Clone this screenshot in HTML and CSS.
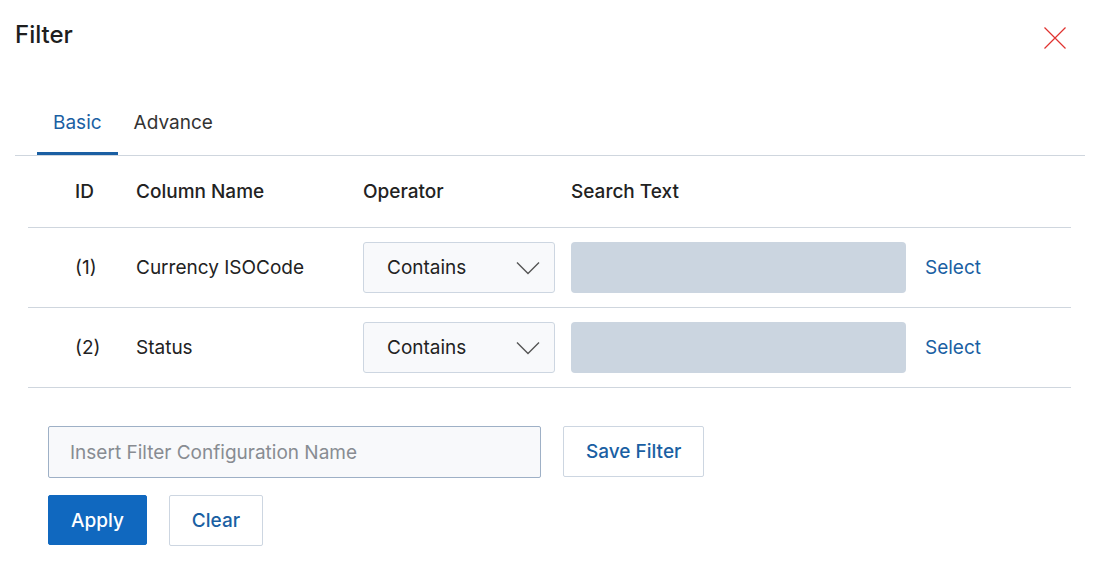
FILE: index.html
```html
<!DOCTYPE html>
<html lang="en">
<head>
    <meta charset="UTF-8">
    <meta name="viewport" content="width=device-width, initial-scale=1.0">
    <title>Filter</title>
<link rel="stylesheet" href="styles.css">
</head>
<body>
<div class="dialog">
    <div class="head">
        <h1>Filter</h1>
        <button class="close" aria-label="Close">
            <svg width="22" height="22" viewBox="0 0 22 22"><path d="M0.5 0.5L21.5 21.5M21.5 0.5L0.5 21.5" stroke="#e0322f" stroke-width="1.2" fill="none"/></svg>
        </button>
    </div>
    <div class="tabs">
        <div class="tab active">Basic</div>
        <div class="tab">Advance</div>
    </div>
    <div class="grid">
        <div class="row hdr">
            <div class="c1">ID</div>
            <div>Column Name</div>
            <div>Operator</div>
            <div>Search Text</div>
            <div></div>
        </div>
        <div class="row">
            <div class="c1">(1)</div>
            <div>Currency ISOCode</div>
            <div><div class="sel">Contains<svg width="24" height="14" viewBox="0 0 24 14"><path d="M1 1.5L12 12.5L23 1.5" stroke="#555" stroke-width="1.4" fill="none"/></svg></div></div>
            <div><div class="search"></div></div>
            <div><a class="link">Select</a></div>
        </div>
        <div class="row">
            <div class="c1">(2)</div>
            <div>Status</div>
            <div><div class="sel">Contains<svg width="24" height="14" viewBox="0 0 24 14"><path d="M1 1.5L12 12.5L23 1.5" stroke="#555" stroke-width="1.4" fill="none"/></svg></div></div>
            <div><div class="search"></div></div>
            <div><a class="link">Select</a></div>
        </div>
    </div>
    <div class="bottom">
        <div class="line">
            <input type="text" class="name" placeholder="Insert Filter Configuration Name">
            <button class="btn">Save Filter</button>
        </div>
        <div class="line">
            <button class="btn primary">Apply</button>
            <button class="btn">Clear</button>
        </div>
    </div>
</div>
</body>
</html>
```
FILE: styles.css
```css
html,body{margin:0;background:#fff;}
body{font-family:Inter,"Noto Sans",sans-serif;color:#222;font-size:19px;}
.dialog{padding:20px 8px 0 15px;}
.head{display:flex;justify-content:space-between;align-items:flex-start;padding-right:19px;}
h1{margin:0;font-size:24px;font-weight:500;line-height:30px;color:#1e1e1e;}
.close{background:none;border:0;padding:0;margin-top:7px;width:22px;height:22px;cursor:pointer;}
.close svg{display:block;}
.tabs{display:flex;margin-top:42px;padding-left:22px;border-bottom:1px solid #cfd6de;}
.tab{padding:19px 16px 17px;line-height:24px;border-bottom:3px solid transparent;color:#333;}
.tab.active{color:#1a5fa3;border-bottom-color:#1a5fa3;}
.grid{margin:0 14px 0 13px;}
.row{display:grid;grid-template-columns:108px 227px 208px 354px 1fr;align-items:center;height:79px;border-bottom:1px solid #cfd6de;}
.row.hdr{height:71px;font-weight:500;}
.c1{padding-left:47px;}
.sel{width:192px;height:51px;box-sizing:border-box;border:1px solid #cdd6e1;border-radius:3px;background:#f8f9fb;
display:flex;align-items:center;justify-content:space-between;padding:0 14px 0 23px;}
.search{width:335px;height:51px;background:#cbd5e0;border-radius:4px;}
.link{color:#1a5fa3;cursor:pointer;}
.bottom{padding:38px 0 0 33px;}
.line{display:flex;gap:22px;margin-bottom:17px;}
.name{width:493px;height:52px;box-sizing:border-box;border:1px solid #9eb0c6;border-radius:2px;background:#f8f9fb;
padding:0 21px;font-family:inherit;font-size:19px;color:#222;}
.name::placeholder{color:#888c92;}
.btn{height:51px;box-sizing:border-box;padding:0 22px;font-family:inherit;font-size:19px;font-weight:500;color:#1a5fa3;
background:#fff;border:1px solid #cdd6e1;border-radius:2px;}
.btn.primary{background:#1068bf;border-color:#1068bf;color:#fff;height:50px;}
```
